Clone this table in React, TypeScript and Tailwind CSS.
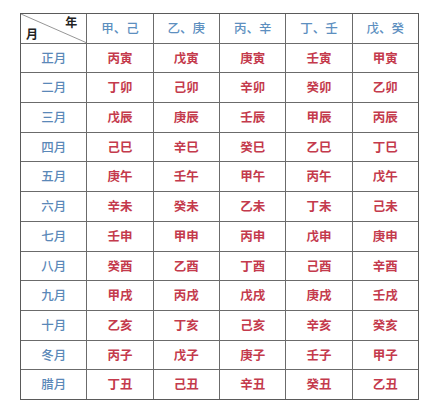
import React from "react";

const heads = ["甲、己", "乙、庚", "丙、辛", "丁、壬", "戊、癸"];
const rows: [string, string[]][] = [
  ["正月", ["丙寅", "戊寅", "庚寅", "壬寅", "甲寅"]],
  ["二月", ["丁卯", "己卯", "辛卯", "癸卯", "乙卯"]],
  ["三月", ["戊辰", "庚辰", "壬辰", "甲辰", "丙辰"]],
  ["四月", ["己巳", "辛巳", "癸巳", "乙巳", "丁巳"]],
  ["五月", ["庚午", "壬午", "甲午", "丙午", "戊午"]],
  ["六月", ["辛未", "癸未", "乙未", "丁未", "己未"]],
  ["七月", ["壬申", "甲申", "丙申", "戊申", "庚申"]],
  ["八月", ["癸酉", "乙酉", "丁酉", "己酉", "辛酉"]],
  ["九月", ["甲戌", "丙戌", "戊戌", "庚戌", "壬戌"]],
  ["十月", ["乙亥", "丁亥", "己亥", "辛亥", "癸亥"]],
  ["冬月", ["丙子", "戊子", "庚子", "壬子", "甲子"]],
  ["腊月", ["丁丑", "己丑", "辛丑", "癸丑", "乙丑"]],
];

export default function App() {
  return (
    <div
      className="w-[440px] h-[414px] bg-white pt-[13px] pl-[20px]"
      style={{ fontFamily: '"Noto Sans CJK SC", "Noto Sans", sans-serif' }}
    >
      <div className="grid grid-cols-6 grid-rows-[repeat(13,minmax(0,1fr))] gap-[1px] bg-[#6b6b6b] border border-[#5a5a5a] w-[399px] h-[387px]">
        <div className="relative bg-white">
          <svg className="absolute inset-0 w-full h-full" viewBox="0 0 65 29" preserveAspectRatio="none">
            <line x1="0" y1="0" x2="65" y2="29" stroke="#8a8a8a" strokeWidth="0.9" />
          </svg>
          <span className="absolute right-[9px] top-[2px] text-[12px] font-bold text-[#222] leading-none">年</span>
          <span className="absolute left-[5px] bottom-[3px] text-[12px] font-bold text-[#222] leading-none">月</span>
        </div>
        {heads.map((h) => (
          <div key={h} className="bg-white flex items-center justify-center text-[12.5px] font-medium text-[#5d8fbf]">
            {h}
          </div>
        ))}
        {rows.map(([m, cells]) => (
          <React.Fragment key={m}>
            <div className="bg-white flex items-center justify-center text-[12.5px] font-medium text-[#5a88b8]">{m}</div>
            {cells.map((c, i) => (
              <div key={m + i} className="bg-white flex items-center justify-center text-[12.5px] font-semibold text-[#c43a4c]">
                {c}
              </div>
            ))}
          </React.Fragment>
        ))}
      </div>
    </div>
  );
}
